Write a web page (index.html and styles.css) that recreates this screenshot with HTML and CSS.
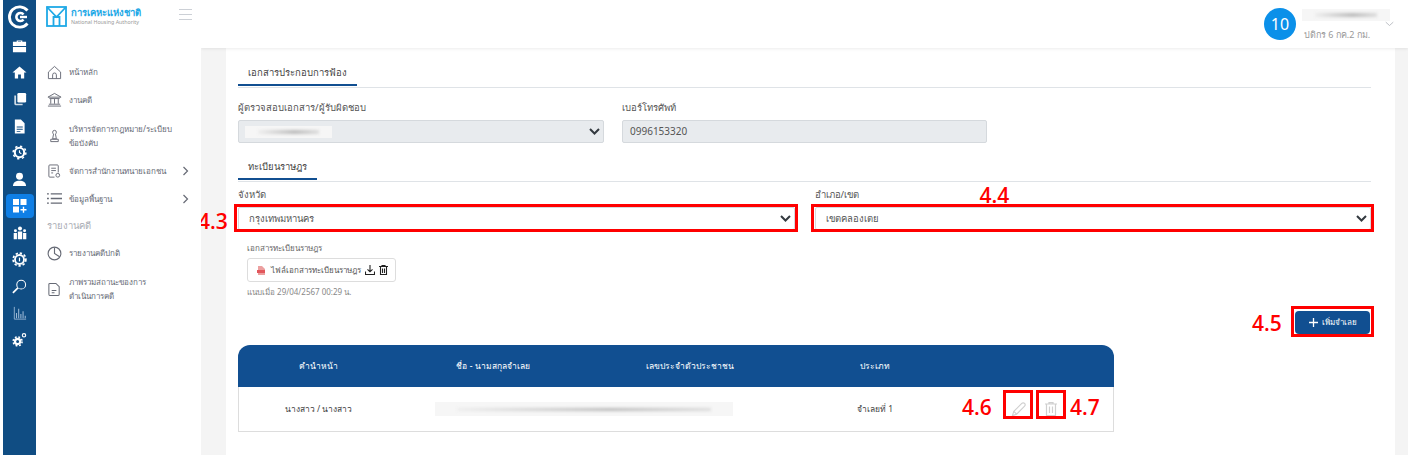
FILE: index.html
```html
<!DOCTYPE html>
<html lang="th">
<head>
<meta charset="UTF-8" />
<title>เอกสารประกอบการฟ้อง</title>
<link rel="stylesheet" href="styles.css">
</head>
<body>

<nav class="rail">
  <div class="rail-logo">
    <svg width="24" height="24" viewBox="0 0 24 24" fill="none" stroke="#fff"><path d="M19.5 5.5A10.2 10.2 0 1 0 19.5 18.500" stroke-width="2.800"/><path d="M15.500 9.500a4 4 0 1 0 0 5" stroke-width="2.600"/><path d="M12 12h7" stroke-width="2.400"/></svg>
  </div>
  <div class="rail-item"><svg width="15" height="15" viewBox="0 0 16 16" fill="#fff"><path d="M5 3V1.500h6V3h4v4.500H1V3zM6.300 3h3.400v-.5H6.300zM1 8.500h14V14H1z"/></svg></div>
  <div class="rail-item"><svg width="15" height="15" viewBox="0 0 16 16" fill="#fff"><path d="M8 1.500 0.500 8H3v6.500h3.500V10h3v4.500H13V8h2.500z"/></svg></div>
  <div class="rail-item"><svg width="14" height="14" viewBox="0 0 16 16" fill="#fff"><rect x="5" y="1" width="10" height="11" rx="1.500"/><path d="M3.500 4v9.500H11v1.500H3a1.500 1.500 0 0 1-1.500-1.500V4z" opacity=".8"/></svg></div>
  <div class="rail-item"><svg width="13" height="15" viewBox="0 0 14 16" fill="#fff"><path d="M2 .5h6.500L12.500 4.500v11H2zM4 8v1h6.500V8zM4 10.500v1h6.500v-1zM4 13v1h4v-1z" fill-rule="evenodd"/></svg></div>
  <div class="rail-item"><svg width="15" height="15" viewBox="0 0 16 16" fill="none" stroke="#fff"><circle cx="8" cy="8" r="5" stroke-width="2.200"/><circle cx="8" cy="8" r="6.800" stroke-width="1.600" stroke-dasharray="2.400 2.900"/><path d="M8 5.500V8l2 1.500" stroke-width="1.200"/></svg></div>
  <div class="rail-item"><svg width="15" height="15" viewBox="0 0 16 16" fill="#fff"><circle cx="8" cy="4.500" r="3.700"/><path d="M1 15c0-4 3-5.800 7-5.800s7 1.800 7 5.800z"/></svg></div>
  <div class="rail-item is-active"><svg width="14" height="14" viewBox="0 0 14 14" fill="#fff"><rect width="6" height="6"/><rect x="7.500" width="6" height="6"/><rect y="7.500" width="6" height="6"/><path d="M9.800 7.800h1.400v2.200h2.300v1.400h-2.300v2.300H9.800v-2.300H7.500V10h2.300z"/></svg></div>
  <div class="rail-item"><svg width="14" height="14" viewBox="0 0 16 16" fill="#fff"><circle cx="8" cy="2.800" r="2.300"/><circle cx="2.800" cy="5.500" r="1.700"/><circle cx="13.200" cy="5.500" r="1.700"/><path d="M5.500 6.300h5V15h-5zM.8 8h3.700v7H.8zM11.500 8h3.700v7h-3.700z"/></svg></div>
  <div class="rail-item"><svg width="15" height="15" viewBox="0 0 16 16" fill="none" stroke="#fff"><circle cx="8" cy="8" r="4.800" stroke-width="2"/><circle cx="8" cy="8" r="6.800" stroke-width="1.800" stroke-dasharray="2.500 2"/><path d="M8 6v4" stroke-width="1.300"/></svg></div>
  <div class="rail-item"><svg width="15" height="15" viewBox="0 0 16 16" fill="none" stroke="#fff"><circle cx="9.800" cy="6" r="4.700" stroke-width="1.100"/><path d="M6.300 9.500 1 14.800" stroke-width="1.800"/></svg></div>
  <div class="rail-item"><svg width="14" height="14" viewBox="0 0 16 16" fill="none" stroke="#9db9d6"><path d="M1.500 1v14H15" stroke-width="1"/><path d="M4 14V8M6.500 14V3M9 14V9M11.500 14V6M14 14v-3" stroke-width="1.200"/></svg></div>
  <div class="rail-item"><svg width="15" height="15" viewBox="0 0 16 16" fill="none" stroke="#fff"><circle cx="6" cy="10" r="2.800" stroke-width="2.400"/><circle cx="6" cy="10" r="4.800" stroke-width="1.600" stroke-dasharray="2 1.800"/><circle cx="12.800" cy="3.500" r="1.800" stroke-width="1.200"/></svg></div>
</nav>

<aside class="sidebar">
  <div class="brand">
    <svg class="brand-mark" width="21" height="21" viewBox="0 0 21 21" fill="none" stroke="#1fa9e6" stroke-width="1.800"><rect x="1" y="1" width="19" height="19"/><path d="M1 1 10.500 11 20 1M7.500 20v-9h6v9" /></svg>
    <div class="brand-text">
      <div class="brand-th">การเคหะแห่งชาติ</div>
      <div class="brand-en">National Housing Authority</div>
    </div>
    <div class="burger"><span></span><span></span><span></span></div>
  </div>
  <ul class="menu">
    <li class="menu-item">
      <svg width="15" height="15" viewBox="0 0 16 16" fill="none" stroke="#666a75"><path d="M1.500 7.500 8 1.500l6.500 6v7h-13zM6 14.500V10.500a2 2 0 0 1 4 0v4"/></svg>
      <span>หน้าหลัก</span>
    </li>
    <li class="menu-item">
      <svg width="15" height="15" viewBox="0 0 16 16" fill="none" stroke="#666a75"><path d="M1 5.500 8 1.500l7 4zM2.500 7h11M4 7.500v5M8 7.500v5M12 7.500v5M2 13h12M1 15h14"/></svg>
      <span>งานคดี</span>
    </li>
    <li class="menu-item is-tall">
      <svg width="15" height="15" viewBox="0 0 16 16" fill="none" stroke="#666a75"><path d="M6 4.500a2 2 0 1 1 4 0c0 1-.6 1.500-1 2l1 5H6l1-5c-.4-.5-1-1-1-2zM4 12h8v2.500H4z"/></svg>
      <span>บริหารจัดการกฎหมาย/ระเบียบ<br>ข้อบังคับ</span>
    </li>
    <li class="menu-item">
      <svg width="15" height="15" viewBox="0 0 16 16" fill="none" stroke="#666a75"><path d="M12 9V2a1 1 0 0 0-1-1H3a1 1 0 0 0-1 1v11a1 1 0 0 0 1 1h5M4.500 4.500h5M4.500 7h5M4.500 9.500h2"/><circle cx="11.500" cy="12" r="2"/></svg>
      <span>จัดการสำนักงานทนายเอกชน</span>
      <svg class="menu-arrow" width="7" height="10" viewBox="0 0 7 10" fill="none" stroke="#666a75" stroke-width="1.200"><path d="m1.500 1 4 4-4 4"/></svg>
    </li>
    <li class="menu-item">
      <svg width="15" height="15" viewBox="0 0 16 16" fill="none" stroke="#666a75" stroke-width="1.400"><path d="M0 3h2M4 3h12M0 8h2M4 8h12M0 13h2M4 13h12"/></svg>
      <span>ข้อมูลพื้นฐาน</span>
      <svg class="menu-arrow" width="7" height="10" viewBox="0 0 7 10" fill="none" stroke="#666a75" stroke-width="1.200"><path d="m1.500 1 4 4-4 4"/></svg>
    </li>
    <li class="menu-head">รายงานคดี</li>
    <li class="menu-item">
      <svg width="15" height="15" viewBox="0 0 16 16" fill="none" stroke="#666a75" stroke-width="1.200"><circle cx="8" cy="8" r="6.800"/><path d="M8 1.500V8l5.500 3.500"/></svg>
      <span>รายงานคดีปกติ</span>
    </li>
    <li class="menu-item is-tall">
      <svg width="15" height="15" viewBox="0 0 16 16" fill="none" stroke="#666a75" stroke-width="1.100"><path d="M3 1.500h6.500L13 5v8a1.500 1.500 0 0 1-1.500 1.500h-8A1.500 1.500 0 0 1 2 13V2.500a1 1 0 0 1 1-1zM5 9h5M5 11.500h3"/></svg>
      <span>ภาพรวมสถานะของการ<br>ดำเนินการคดี</span>
    </li>
  </ul>
</aside>

<div class="main">
  <header class="topbar">
    <div class="avatar">10</div>
    <div class="user">
      <div class="blur-box user-name"><i></i></div>
      <div class="user-sub">ปดิกร 6 กค.2 กม.</div>
    </div>
    <svg class="user-caret" width="9" height="6" viewBox="0 0 12 7" fill="none" stroke="#a8abb2"><path d="m1 1 5 4.500L11 1"/></svg>
  </header>

  <div class="content">
    <section class="card">
      <div class="tabline"><div class="tab">เอกสารประกอบการฟ้อง</div></div>

      <div class="row row-top">
        <div class="field">
          <label class="label">ผู้ตรวจสอบเอกสาร/ผู้รับผิดชอบ</label>
          <div class="control is-disabled">
            <div class="blur-box control-blur"><i></i></div>
            <svg class="chev" width="11" height="7" viewBox="0 0 11 7" fill="none" stroke="#343a40" stroke-width="2"><path d="m1 1 4.500 4.500L10 1"/></svg>
          </div>
        </div>
        <div class="field">
          <label class="label">เบอร์โทรศัพท์</label>
          <div class="control is-disabled is-phone">0996153320</div>
        </div>
      </div>

      <div class="tabline tabline-2"><div class="tab">ทะเบียนราษฎร</div></div>

      <div class="row row-addr">
        <div class="field">
          <label class="label">จังหวัด</label>
          <div class="control">
            กรุงเทพมหานคร
            <svg class="chev" width="11" height="7" viewBox="0 0 11 7" fill="none" stroke="#343a40" stroke-width="2"><path d="m1 1 4.500 4.500L10 1"/></svg>
            <div class="mark"></div>
            <div class="tag tag-43">4.3</div>
          </div>
        </div>
        <div class="field">
          <label class="label">อำเภอ/เขต</label>
          <div class="control">
            เขตคลองเตย
            <svg class="chev" width="11" height="7" viewBox="0 0 11 7" fill="none" stroke="#343a40" stroke-width="2"><path d="m1 1 4.500 4.500L10 1"/></svg>
            <div class="mark"></div>
            <div class="tag tag-44">4.4</div>
          </div>
        </div>
      </div>

      <div class="upload">
        <div class="upload-label">เอกสารทะเบียนราษฎร</div>
        <div class="file">
          <svg width="8" height="9" viewBox="0 0 8 9"><path d="M1 0h4l3 3v6H1z" fill="#eca0a0"/><rect y="4" width="8" height="3" fill="#e2575c"/></svg>
          <span>ไฟล์เอกสารทะเบียนราษฎร</span>
          <svg width="10" height="10" viewBox="0 0 10 10" fill="none" stroke="#222" stroke-width="1.100"><path d="M5 0v6.500M2.500 4.300 5 6.800l2.500-2.500M.5 6.500v3h9v-3"/></svg>
          <svg width="9" height="10" viewBox="0 0 9 10" fill="none" stroke="#222" stroke-width="1.100"><path d="M0 1.500h9M3 1.500V.5h3v1M1.500 2v7.500h6V2M3.500 3.500v4.500M5.500 3.500v4.500"/></svg>
        </div>
        <div class="upload-date">แนบเมื่อ 29/04/2567 00:29 น.</div>
      </div>

      <div class="actions">
        <button class="btn-add">
          <svg width="9" height="9" viewBox="0 0 9 9" stroke="#fff" stroke-width="1.300"><path d="M4.500 0v9M0 4.500h9"/></svg>
          เพิ่มจำเลย
          <span class="mark mark-btn"></span>
          <span class="tag tag-45">4.5</span>
        </button>
      </div>

      <table class="grid">
        <thead>
          <tr>
            <th class="col-title">คำนำหน้า</th>
            <th class="col-name">ชื่อ - นามสกุลจำเลย</th>
            <th class="col-id">เลขประจำตัวประชาชน</th>
            <th class="col-type">ประเภท</th>
            <th class="col-act"></th>
          </tr>
        </thead>
        <tbody>
          <tr>
            <td>นางสาว / นางสาว</td>
            <td colspan="2" class="cell-blur"><div class="blur-box row-blur"><i></i></div></td>
            <td>จำเลยที่ 1</td>
            <td class="cell-act">
              <div class="act-wrap">
                <span class="tag tag-46">4.6</span>
                <span class="act">
                  <svg width="15" height="15" viewBox="0 0 16 16" fill="none" stroke="#cfcfcf" stroke-width="1.200"><path d="M1.500 14.500 3 10l8.500-8.500a1.800 1.800 0 0 1 3 3L6 13zM3 10l3 3"/></svg>
                  <span class="mark mark-act"></span>
                </span>
                <span class="act">
                  <svg width="12" height="14" viewBox="0 0 12 14" fill="none" stroke="#cfcfcf" stroke-width="1.200"><path d="M0 2h12M4 2V.6h4V2M1.500 2.500v11h9v-11M4.500 4.500v6.500M7.500 4.500v6.500"/></svg>
                  <span class="mark mark-act"></span>
                </span>
                <span class="tag tag-47">4.7</span>
              </div>
            </td>
          </tr>
        </tbody>
      </table>
    </section>
  </div>
</div>

</body>
</html>
```

FILE: styles.css
```css
html, body {
  margin: 0; padding: 0;
  height: 455px; width: 1408px;
  overflow: hidden;
  background: #fff;
  font-family: 'Noto Sans', 'Open Sans', 'DejaVu Sans', sans-serif;
  color: #555;
}
body {
  display: flex;
  padding-left: 3px;
  box-sizing: border-box;
}

/* icon rail */
.rail {
  width: 33px;
  flex: none;
  background: #104d83;
  display: flex;
  flex-direction: column;
  align-items: center;
}
.rail-logo {
  height: 34px;
  display: flex;
  align-items: center;
  justify-content: center;
}
.rail-logo svg { width: 24px; height: 24px; }
.rail-item {
  width: 28px;
  height: 24px;
  margin-bottom: 2.700px;
  display: flex;
  align-items: center;
  justify-content: center;
  border-radius: 4px;
}
.rail-item.is-active { background: #0f7fe6; }

/* sidebar */
.sidebar {
  width: 165px;
  flex: none;
  background: #fff;
  position: relative;
  z-index: 2;
}
.brand {
  display: flex;
  align-items: flex-start;
  padding: 6px 9px 0 10px;
  height: 50px;
  box-sizing: border-box;
}
.brand-mark { flex: none; }
.brand-text { margin-left: 4px; flex: 1; padding-top: 1px; }
.brand-th {
  font-size: 9.500px;
  line-height: 11px;
  font-weight: 600;
  color: #1fa9e6;
}
.brand-en {
  font-size: 5.300px;
  line-height: 9px;
  color: #999;
}
.burger { margin-top: 3px; width: 13px; }
.burger span {
  display: block;
  height: 1px;
  background: #ccd0d6;
  margin-bottom: 4px;
}
.menu {
  list-style: none;
  margin: 0;
  padding: 8.500px 0 0 11px;
}
.menu-item {
  display: flex;
  align-items: center;
  height: 27.500px;
  font-size: 8px;
  line-height: 14px;
  color: #666a75;
}
.menu-item.is-tall { height: 44px; }
.menu-item > svg:first-child {
  flex: none;
  margin-right: 7px;
}
.menu-item > span { flex: 1; }
.menu-arrow { margin-right: 12px; }
.menu-head {
  height: 27px;
  line-height: 25px;
  font-size: 9.500px;
  color: #aaadb5;
}

/* top bar + page */
.main {
  flex: 1;
  min-width: 0;
  display: flex;
  flex-direction: column;
}
.topbar {
  height: 48px;
  flex: none;
  display: flex;
  align-items: center;
  justify-content: flex-end;
  padding-right: 14px;
  background: #fff;
  box-shadow: 0 1px 3px rgba(0, 0, 0, 0.08);
  position: relative;
  z-index: 1;
}
.avatar {
  width: 32px;
  height: 32px;
  border-radius: 50%;
  background: #0b90e9;
  color: #fff;
  font-size: 16px;
  line-height: 32px;
  text-align: center;
  margin-right: 6px;
}
.user { width: 88px; }
.user-name { height: 12px; margin-bottom: 8px; }
.user-sub {
  font-size: 9px;
  line-height: 11px;
  color: #999;
  padding-left: 2px;
}
.user-caret { margin-left: -5px; }

.blur-box {
  background: #f6f6f6;
  display: flex;
  align-items: center;
  justify-content: center;
  overflow: hidden;
}
.blur-box i {
  display: block;
  width: 70%;
  height: 4px;
  background: linear-gradient(90deg, #eee, #bbb 60%, #ddd);
  filter: blur(1.500px);
}

.content {
  flex: 1;
  background: #f4f4f4;
  padding: 0 13px 0 25px;
}
.card {
  height: 100%;
  box-sizing: border-box;
  background: #fff;
  padding: 17px 24px 0 12px;
}
.tabline {
  display: flex;
  align-items: flex-start;
  border-bottom: 1px solid #dfe3e7;
  height: 22px;
}
.tab {
  height: 21px;
  padding: 0 10px;
  font-size: 9.500px;
  line-height: 16px;
  font-weight: 500;
  color: #444;
  border-bottom: 2px solid #114f91;
  box-sizing: border-box;
}
.row { display: grid; }
.row-top {
  grid-template-columns: 366px 365px;
  column-gap: 18px;
  margin-top: 12px;
}
.row-addr {
  grid-template-columns: 1fr 1fr;
  column-gap: 20px;
  margin-top: 5px;
}
.tabline-2 { margin-top: 16px; }
.label {
  display: block;
  height: 20px;
  font-size: 9.500px;
  line-height: 15px;
  color: #555;
}
.control {
  position: relative;
  height: 23px;
  box-sizing: border-box;
  border: 1px solid #d5d9dd;
  border-radius: 2px;
  padding-left: 10px;
  font-size: 9.500px;
  line-height: 21px;
  color: #555;
  background: #fff;
}
.control.is-disabled { background: #e8ebee; }
.control.is-phone { padding-left: 7px; font-size: 10px; }
.control-blur {
  position: absolute;
  left: 6px; top: 5px;
  width: 87px; height: 12px;
}
.chev {
  position: absolute;
  right: 3px; top: 7px;
}

/* red callouts drawn on the original screenshot */
.mark {
  position: absolute;
  left: -5px; right: -4px; top: -4px; bottom: -3px;
  border: 3.500px solid #f00;
  pointer-events: none;
}
.tag {
  position: absolute;
  color: #f00;
  font-family: 'Open Sans', sans-serif;
  font-size: 21px;
  line-height: 24px;
  font-weight: 600;
  white-space: nowrap;
}
.tag-43 { left: -41px; top: 1px; }
.tag-44 { left: 164px; top: -25px; }
.tag-45 { left: -43px; top: 0; }

.upload { margin: 11px 0 0 9px; height: 62px; }
.upload-label { font-size: 8px; line-height: 13px; color: #666; }
.file {
  margin-top: 4px;
  width: 149px;
  height: 24px;
  box-sizing: border-box;
  border: 1px solid #ddd;
  border-radius: 3px;
  padding: 0 7px 0 9px;
  display: flex;
  align-items: center;
  gap: 4px;
  font-size: 8px;
  color: #555;
}
.file span { flex: 1; margin-left: 2px; white-space: nowrap; }
.upload-date { margin-top: 3px; font-size: 8px; line-height: 13px; color: #888; }

.actions {
  display: flex;
  justify-content: flex-end;
  margin-top: 8px;
}
.btn-add {
  position: relative;
  margin-right: 1px;
  width: 75px;
  height: 23px;
  border: 0;
  border-radius: 4px;
  background: #114f91;
  color: #fff;
  font-family: inherit;
  font-size: 8px;
  display: flex;
  align-items: center;
  justify-content: center;
  gap: 4px;
}
.mark-btn { left: -4px; right: -4px; top: -5px; bottom: -3px; }

.grid {
  margin-top: 11px;
  width: 876px;
  border-collapse: separate;
  border-spacing: 0;
  table-layout: fixed;
  font-size: 8.500px;
}
.grid th {
  height: 42px;
  padding: 0;
  background: #114f91;
  color: #fff;
  font-weight: 500;
  text-align: center;
}
.grid th:first-child { border-top-left-radius: 12px; }
.grid th:last-child { border-top-right-radius: 12px; }
.grid td {
  height: 44px;
  padding: 0;
  text-align: center;
  color: #444;
  border-bottom: 1px solid #ddd;
}
.grid td:first-child { border-left: 1px solid #ddd; }
.grid td:last-child { border-right: 1px solid #ddd; }
.col-title { width: 160px; }
.col-name { width: 190px; }
.col-id { width: 204px; }
.col-type { width: 166px; }
.col-act { width: 156px; }
.row-blur { height: 14px; margin: 0 59px 0 37px; }
.row-blur i { width: 85%; height: 3px; }
.act-wrap {
  position: relative;
  display: flex;
  gap: 3px;
  margin-left: 45px;
}
.act {
  position: relative;
  width: 30px;
  height: 22px;
  display: flex;
  align-items: center;
  justify-content: center;
}
.mark-act { left: 0; right: 0; top: -8px; bottom: 1px; }
.tag-46 { left: -41px; top: -3px; }
.tag-47 { left: 67px; top: -3px; }
```
